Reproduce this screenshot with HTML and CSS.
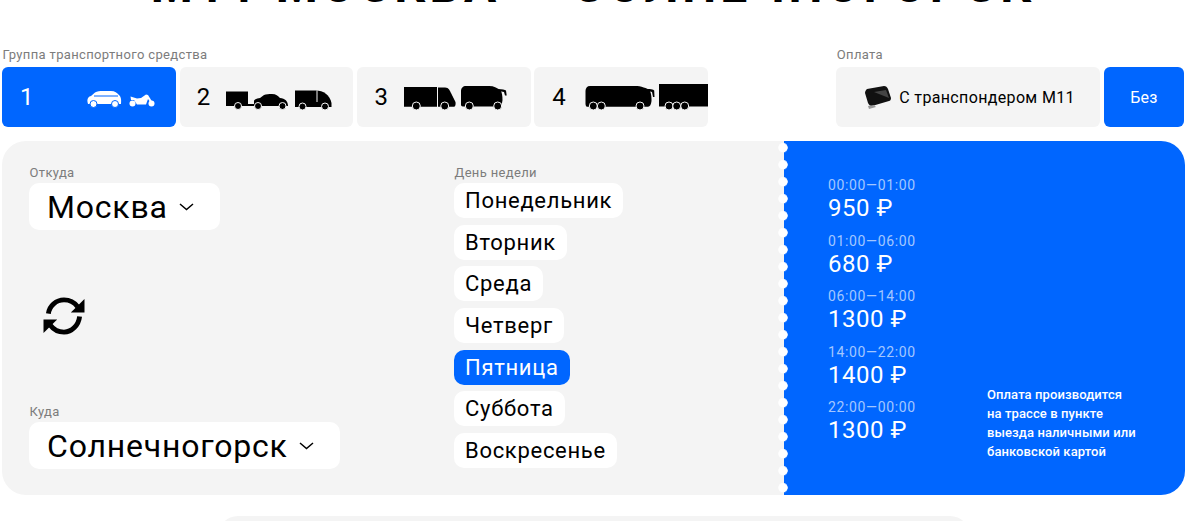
FILE: index.html
```html
<!DOCTYPE html>
<html lang="ru">

<head>
    <meta charset="UTF-8">
    <title>Тарифы М11</title>
    <link rel="stylesheet" href="styles.css">
</head>

<body>
    <div class="page">
        <h1 class="title">М11 МОСКВА — СОЛНЕЧНОГОРСК</h1>

        <div class="filters">
            <div class="filter-group">
                <div class="label">Группа транспортного средства</div>
                <div class="tabs">
                    <div class="tab tab-1 active">
                        <span class="num">1</span>
                        <svg class="veh" width="68" height="18" viewBox="0 0 68 18">
                            <path fill="#fff" d="M0.500 12 C0 8 2 6.500 4 6 L8 2.500 C10 1 13 1 16 1 L24 1 C28 1 30 3 32 5 C34 7 34.500 9 34 14 L1 14 Z" />
                            <path stroke="#0066ff" d="M7 6 H31" />
                            <circle fill="#fff" stroke="#0066ff" cx="6.500" cy="14" r="3.500" />
                            <circle fill="#fff" stroke="#0066ff" cx="28" cy="14" r="3.500" />
                            <path fill="#fff" d="M43.500 6.500 L50 8.500 L54 8 L59 4.500 L61 5 L66 13 L64.500 14 L61 9 L59 14.500 L50 14.500 L47 10 L44 10 Z" />
                            <circle fill="#fff" cx="45.500" cy="13.500" r="3" />
                            <circle fill="#fff" cx="64.500" cy="13.500" r="3" />
                        </svg>
                    </div>
                    <div class="tab tab-2">
                        <span class="num">2</span>
                        <svg class="veh" width="106" height="20" viewBox="0 0 106 20">
                            <path d="M0 1.500 H22 V16 H0 Z M22 14 H29 V16 H22 Z" />
                            <circle cx="12" cy="16" r="3.500" stroke="#f4f4f4" />
                            <path d="M28 16 V11 C28 9.500 30 8.500 34 8 L38 5 C40 4 43 4 46 4 C50 4 52 6 54 8 C59 8.500 62 11 62 16 Z" />
                            <circle cx="32" cy="16" r="3.500" stroke="#f4f4f4" />
                            <circle cx="56.500" cy="16" r="3.500" stroke="#f4f4f4" />
                            <path d="M69 0.500 H90 C97 0.500 104 5 105.500 13 V17 H69 Z" />
                            <path stroke="#f4f4f4" d="M91 0.500 V12" />
                            <circle cx="76.500" cy="16.500" r="3.500" stroke="#f4f4f4" />
                            <circle cx="99" cy="16.500" r="3.500" stroke="#f4f4f4" />
                        </svg>
                    </div>
                    <div class="tab tab-3">
                        <span class="num">3</span>
                        <svg class="veh" width="108" height="24" viewBox="0 0 108 24">
                            <path d="M0 1 H33 V20.700 H0 Z" />
                            <path d="M34 1.500 H41 C45 1.500 46 5 47 7 L51.500 16 C52 19 51 20.700 50 20.700 H34 Z" />
                            <circle cx="12.300" cy="20" r="4" stroke="#f4f4f4" />
                            <circle cx="40.700" cy="20" r="4" stroke="#f4f4f4" />
                            <path d="M57 5 C57 2 59 0 62 0 H85 C90 0 94 2 97 5 C98 7 98.500 10 98.500 14 C98 18 97 20.500 95 20.500 H59 C57 20.500 57 19 57 18 Z" />
                            <path d="M94 3 C98 3.500 101 3.500 102 4.500 L102.700 9.500 H101 L100 6 C98 5.500 97 5.500 95 5.500 Z" />
                            <circle cx="65.300" cy="20" r="4" stroke="#f4f4f4" />
                            <circle cx="93.700" cy="20" r="4" stroke="#f4f4f4" />
                        </svg>
                    </div>
                    <div class="tab tab-4">
                        <span class="num">4</span>
                        <svg class="veh" width="123" height="27" viewBox="0 0 123 27">
                            <path d="M0.500 7 C0.500 4 2 2 5 2 H50 C56 2 62 4 65 7 C66.500 10 66.500 14 66.500 17 C66 21 65 22.700 63 22.700 H2 C1 22.700 0.500 21 0.500 20 Z" />
                            <path d="M60 4.500 C64 5 69 5.500 69.200 6.500 L69.500 13 H68 L67 8 C65 7.500 63 7 61 7 Z" />
                            <circle cx="8.300" cy="22" r="4" stroke="#f4f4f4" />
                            <circle cx="16.300" cy="22" r="4" stroke="#f4f4f4" />
                            <circle cx="55" cy="22" r="4" stroke="#f4f4f4" />
                            <path d="M74 0 H123 V22.500 H74 Z" />
                            <circle cx="84" cy="22" r="4" stroke="#f4f4f4" />
                            <circle cx="91.700" cy="22" r="4" stroke="#f4f4f4" />
                            <circle cx="99.700" cy="22" r="4" stroke="#f4f4f4" />
                        </svg>
                    </div>
                </div>
            </div>

            <div class="filter-group">
                <div class="label">Оплата</div>
                <div class="tabs">
                    <div class="tab pay-tab">
                        <svg width="28" height="25" viewBox="0 0 28 25">
                            <path fill="#111" d="M3 4 L20 1 C22 1 23 2 24 4 L27 13 C27 15 26 16 25 16 L8 21 C6 21 5 20 4 18 L1 8 C1 6 2 5 3 4 Z" />
                            <path fill="#444" d="M10 7 L22 5 L25 13 L20 11 Z" />
                            <path fill="#999" d="M4 21 L10 20 L12 22 L5 24 Z" />
                        </svg>
                        <span>С транспондером М11</span>
                    </div>
                    <div class="tab no-tab active">Без</div>
                </div>
            </div>
        </div>

        <div class="ticket">
            <div class="ticket-left">
                <div class="route-col">
                    <div class="field">
                        <div class="label">Откуда</div>
                        <div class="select">Москва
                            <svg width="15" height="8" viewBox="0 0 15 8"><path d="M1 1 L7.500 6.500 L14 1" /></svg>
                        </div>
                    </div>
                    <svg class="swap" width="44" height="39" viewBox="0 0 44 40">
                        <path d="M6 17 C7 9 14 3 22 3 C28 3 33 6 36 10" />
                        <path d="M38 20 C37 29 30 36 22 36 C16 36 11 33 8 29" />
                        <path class="fill" d="M43 2 V16 H29 Z" />
                        <path class="fill" d="M1 37 V23 H15 Z" />
                    </svg>
                    <div class="field">
                        <div class="label">Куда</div>
                        <div class="select">Солнечногорск
                            <svg width="15" height="8" viewBox="0 0 15 8"><path d="M1 1 L7.500 6.500 L14 1" /></svg>
                        </div>
                    </div>
                </div>
                <div class="days-col">
                    <div class="label">День недели</div>
                    <div class="days">
                        <div class="day">Понедельник</div>
                        <div class="day">Вторник</div>
                        <div class="day">Среда</div>
                        <div class="day">Четверг</div>
                        <div class="day active">Пятница</div>
                        <div class="day">Суббота</div>
                        <div class="day">Воскресенье</div>
                    </div>
                </div>
            </div>
            <div class="ticket-right">
                <div class="prices">
                    <div class="price-row"><div class="time">00:00—01:00</div><div class="price">950 ₽</div></div>
                    <div class="price-row"><div class="time">01:00—06:00</div><div class="price">680 ₽</div></div>
                    <div class="price-row"><div class="time">06:00—14:00</div><div class="price">1300 ₽</div></div>
                    <div class="price-row"><div class="time">14:00—22:00</div><div class="price">1400 ₽</div></div>
                    <div class="price-row"><div class="time">22:00—00:00</div><div class="price">1300 ₽</div></div>
                </div>
                <div class="note">Оплата производится на&nbsp;трассе в&nbsp;пункте выезда наличными или банковской картой</div>
            </div>
        </div>

        <div class="next-card"></div>
    </div>
</body>

</html>
```

FILE: styles.css
```css
* {
    margin: 0;
    padding: 0;
    box-sizing: border-box;
    font-family: 'Roboto', 'Noto Sans', sans-serif;
}

html,
body {
    height: 521px;
    overflow: hidden;
    background: white;
    color: black;
}

.page {
    width: 1200px;
    padding: 0 16px 0 2px;
    display: flex;
    flex-direction: column;
}

.title {
    height: 48px;
    margin-top: -38px;
    font-size: 48px;
    line-height: 48px;
    font-weight: 700;
    text-align: center;
    letter-spacing: 4px;
    white-space: nowrap;
}

.filters {
    display: flex;
    justify-content: space-between;
    margin-top: 38px;
}

.label {
    font-size: 13px;
    line-height: 14px;
    color: #7c7c7c;
    letter-spacing: 0.35px;
    padding-left: 0.500px;
}

.tabs {
    display: flex;
    gap: 3.750px;
    margin-top: 5px;
}

.tab {
    height: 60px;
    width: 174px;
    background: #f4f4f4;
    border-radius: 6px;
    display: flex;
    align-items: center;
    font-size: 24px;
    padding-left: 18px;
}

.tab.active {
    background: #0066ff;
    color: white;
}

.tab-1 {
    justify-content: space-between;
    padding-right: 21px;
}

.tab-2 {
    width: 173px;
    gap: 15px;
    padding-left: 17px;
}

.tab-3 {
    gap: 15px;
}

.tab-4 {
    gap: 18.250px;
    overflow: hidden;
}

.tab .num {
    width: 14px;
    flex-shrink: 0;
}

.veh {
    display: block;
    flex-shrink: 0;
}

.tab-1 .veh {
    margin-top: 4px;
}

.tab-2 .veh {
    margin-top: 6px;
}

.tab-3 .veh {
    margin-top: 2px;
}

.tab-4 .veh {
    margin-top: 1px;
}

.pay-tab {
    width: 264px;
    font-size: 16px;
    padding-left: 28px;
    gap: 7px;
    letter-spacing: 0.350px;
}

.no-tab {
    width: 80px;
    font-size: 16px;
    padding-left: 0;
    justify-content: center;
    letter-spacing: 0.3px;
}

.ticket {
    display: flex;
    height: 354px;
    margin-top: 14px;
    width: 1183px;
    border-radius: 24px;
    overflow: hidden;
}

.ticket-left {
    width: 782px;
    background: #f4f4f4;
    display: flex;
    padding: 25px 0 26px 27px;
}

.route-col {
    width: 425px;
    display: flex;
    flex-direction: column;
    justify-content: space-between;
    align-items: flex-start;
}

.swap {
    margin-left: 13px;
    margin-bottom: 2px;
    fill: none;
    stroke: black;
    stroke-width: 5;
}

.swap .fill {
    fill: black;
    stroke: none;
}

.select {
    display: inline-flex;
    align-items: center;
    gap: 11px;
    height: 47px;
    padding: 0 26px 0 18px;
    margin-top: 3px;
    background: white;
    border-radius: 10px;
    font-size: 32px;
    letter-spacing: 0.800px;
}

.select svg {
    fill: none;
    stroke: black;
    stroke-width: 1.500;
}

.days-col {
    display: flex;
    flex-direction: column;
}

.days {
    display: flex;
    flex-direction: column;
    align-items: flex-start;
    gap: 6.670px;
    margin-top: 3px;
}

.day {
    height: 35px;
    line-height: 35px;
    padding: 0 11px;
    background: white;
    border-radius: 10px;
    font-size: 22px;
    letter-spacing: 0.700px;
}

.day.active {
    background: #0066ff;
    color: white;
}

.ticket-right {
    flex: 1;
    position: relative;
    background: #0066ff;
    color: white;
    display: flex;
    padding: 36px 0 0 44px;
}

.ticket-right::before {
    content: '';
    position: absolute;
    left: -6px;
    top: 0;
    bottom: 0;
    width: 10px;
    background: radial-gradient(circle at center, white 4.400px, transparent 5px) 0 -1.800px / 10px 17px repeat-y;
}

.prices {
    width: 159px;
    display: flex;
    flex-direction: column;
    gap: 7px;
}

.price-row {
    height: 48.500px;
}

.time {
    font-size: 14px;
    line-height: 16px;
    letter-spacing: 0.650px;
    color: #a3c6ff;
}

.price {
    font-size: 24px;
    line-height: 30px;
    letter-spacing: 0.500px;
}

.note {
    align-self: flex-end;
    width: 160px;
    margin-bottom: 34px;
    font-size: 13px;
    line-height: 19px;
    font-weight: 500;
    letter-spacing: 0.100px;
}

.next-card {
    width: 752px;
    height: 40px;
    margin: 21px 0 0 216px;
    background: #f4f4f4;
    border-radius: 20px;
}
```
